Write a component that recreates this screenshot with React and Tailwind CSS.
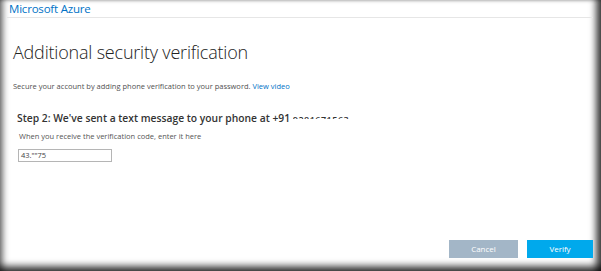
export default function App() {
  return (
    <div
      className="w-[601px] h-[271px] bg-white overflow-hidden flex flex-col pl-[7px] pr-[8px] pb-[9px] shadow-[inset_7px_0_6px_-4px_rgba(0,0,0,0.55),inset_-9px_0_7px_-4px_rgba(0,0,0,0.75),inset_0_-9px_7px_-4px_rgba(0,0,0,0.75),inset_0_3px_3px_-2px_rgba(0,0,0,0.15)]"
      style={{ fontFamily: '"Open Sans", "Noto Sans", sans-serif' }}
    >
      <div className="h-[18px] border-b border-[#e6e6e6] pl-[2px] flex items-center">
        <span className="text-[11.5px] leading-none text-[#0072c6] tracking-[-0.2px]">Microsoft Azure</span>
      </div>

      <div className="flex-1 flex flex-col pl-[6px]">
        <h1 className="mt-[23px] text-[18px] leading-[22px] font-light text-[#222] tracking-[-0.2px]">
          Additional security verification
        </h1>
        <p className="mt-[18px] text-[7.5px] leading-[10px] text-[#505050]">
          Secure your account by adding phone verification to your password.{" "}
          <span className="text-[#0072c6]">View video</span>
        </p>

        <div className="pl-[4px]">
          <h2 className="mt-[20px] text-[10.3px] leading-[14px] font-semibold text-[#333] whitespace-nowrap">
            Step 2: We've sent a text message to your phone at +91{" "}
            <span className="inline-block h-[5px] overflow-hidden align-top mt-[3px] text-[9px] leading-[11px] tracking-[0.5px]">
              9281671563
            </span>
          </h2>
          <p className="mt-[6px] pl-[2px] text-[7.5px] leading-[10px] text-[#555]">
            When you receive the verification code, enter it here
          </p>
          <div className="mt-[8px] ml-[1px] w-[94px] h-[13px] border border-[#b5b5b5] flex items-center pl-[2px]">
            <span className="text-[7.5px] leading-none text-[#444]">43.""75</span>
          </div>
        </div>

        <div className="mt-auto mb-[4px] flex justify-end gap-[9px]">
          <button className="w-[69px] h-[18px] bg-[#a3b6c7] text-white text-[8px] leading-none">Cancel</button>
          <button className="w-[66px] h-[18px] bg-[#00a9ec] text-white text-[8px] leading-none">Verify</button>
        </div>
      </div>
    </div>
  );
}
